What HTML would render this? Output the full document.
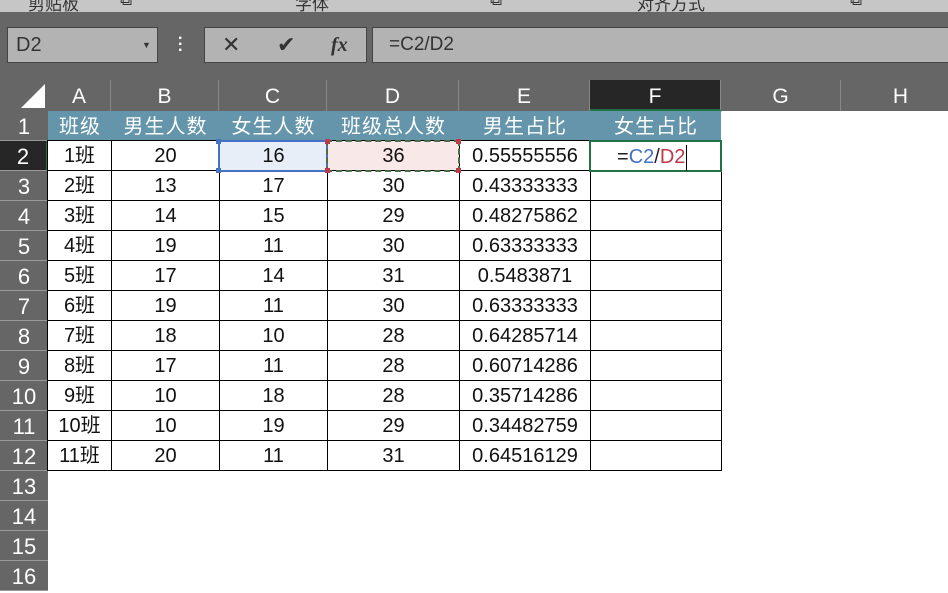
<!DOCTYPE html>
<html><head><meta charset="utf-8"><style>
*{margin:0;padding:0;box-sizing:border-box}
body{width:948px;height:573px;overflow:hidden;background:#fff;font-family:"Liberation Sans","Noto Sans CJK SC",sans-serif;position:relative}
.abs{position:absolute}
.top{left:0;top:0;width:948px;height:12px;background:#c6c6c6;overflow:hidden}
.top span{position:absolute;top:-10px;font-size:17px;color:#333}
.band{left:0;top:12px;width:948px;height:99px;background:#666}
.box{background:#b3b3b3;border:1px solid #444}
.hdr{position:absolute;top:80px;height:31px;color:#fff;font-size:21px;text-align:center;line-height:33px;border-right:1px solid #888}
.rh{position:absolute;left:0;width:48px;height:30px;background:#666;color:#fff;font-size:22px;text-align:center;line-height:32px;border-bottom:1px solid #999}
.row{position:absolute;left:47px;display:flex;height:31px}
.row div{height:31px;border:1px solid #000;margin-right:-1px;font-size:20px;text-align:center;line-height:30px;color:#111;white-space:nowrap}
.row.h div{background:#6495aa;color:#fff;border-color:#6495aa;border-right-color:#fff;letter-spacing:1px;height:30px}
.w1{width:65px}.w2{width:109px}.w3{width:109px}.w4{width:133px}.w5{width:132px}.w6{width:132px}
</style></head><body>
<div class="abs top"><span style="left:28px">剪贴板</span><span style="left:120px">⧉</span><span style="left:295px">字体</span><span style="left:490px">⧉</span><span style="left:637px">对齐方式</span><span style="left:850px">⧉</span></div>
<div class="abs band"></div>
<div class="abs box" style="left:7px;top:27px;width:151px;height:36px;font-size:20px;color:#333;line-height:34px;padding-left:8px">D2<span style="position:absolute;left:134px;top:0;font-size:9px;color:#333">▼</span></div>
<div class="abs" style="left:178px;top:36px;color:#fff;font-size:16px;line-height:6px;font-weight:bold">·<br>·<br>·</div>
<div class="abs box" style="left:204px;top:27px;width:163px;height:36px;color:#333;font-size:22px;line-height:34px"><span style="position:absolute;left:17px">✕</span><span style="position:absolute;left:72px">✔</span><span style="position:absolute;left:126px;font-family:'Liberation Serif',serif;font-style:italic;font-weight:bold;font-size:20px">fx</span></div>
<div class="abs box" style="left:372px;top:27px;width:590px;height:36px;color:#333;font-size:19px;line-height:34px;padding-left:16px">=C2/D2</div>
<div class="abs" style="left:0;top:80px;width:48px;height:31px;background:#666"><div style="position:absolute;right:3px;bottom:3px;width:0;height:0;border-left:24px solid transparent;border-bottom:24px solid #fff"></div></div>
<div class="hdr" style="left:48px;width:63px">A</div>
<div class="hdr" style="left:111px;width:108px">B</div>
<div class="hdr" style="left:219px;width:108px">C</div>
<div class="hdr" style="left:327px;width:132px">D</div>
<div class="hdr" style="left:459px;width:131px">E</div>
<div class="hdr" style="left:590px;width:131px;background:#262626;border-bottom:2px solid #217346">F</div>
<div class="hdr" style="left:721px;width:120px">G</div>
<div class="hdr" style="left:841px;width:120px">H</div>
<div class="rh" style="top:111px">1</div>
<div class="rh" style="top:141px;background:#262626;border-right:2px solid #217346">2</div>
<div class="rh" style="top:171px">3</div><div class="rh" style="top:201px">4</div><div class="rh" style="top:231px">5</div><div class="rh" style="top:261px">6</div><div class="rh" style="top:291px">7</div><div class="rh" style="top:321px">8</div><div class="rh" style="top:351px">9</div><div class="rh" style="top:381px">10</div><div class="rh" style="top:411px">11</div><div class="rh" style="top:441px">12</div><div class="rh" style="top:471px">13</div><div class="rh" style="top:501px">14</div><div class="rh" style="top:531px">15</div><div class="rh" style="top:561px">16</div>
<div class="row h" style="top:111px;left:48px"><div class="w1" style="width:64px">班级</div><div class="w2">男生人数</div><div class="w3">女生人数</div><div class="w4">班级总人数</div><div class="w5">男生占比</div><div class="w6">女生占比</div></div>
<div class="row" style="top:140px"><div class="w1">1班</div><div class="w2">20</div><div class="w3" style="background:#e8eef8">16</div><div class="w4" style="background:#f8e8e8">36</div><div class="w5">0.55555556</div><div class="w6"></div></div>
<div class="row" style="top:170px"><div class="w1">2班</div><div class="w2">13</div><div class="w3">17</div><div class="w4">30</div><div class="w5">0.43333333</div><div class="w6"></div></div>
<div class="row" style="top:200px"><div class="w1">3班</div><div class="w2">14</div><div class="w3">15</div><div class="w4">29</div><div class="w5">0.48275862</div><div class="w6"></div></div>
<div class="row" style="top:230px"><div class="w1">4班</div><div class="w2">19</div><div class="w3">11</div><div class="w4">30</div><div class="w5">0.63333333</div><div class="w6"></div></div>
<div class="row" style="top:260px"><div class="w1">5班</div><div class="w2">17</div><div class="w3">14</div><div class="w4">31</div><div class="w5">0.5483871</div><div class="w6"></div></div>
<div class="row" style="top:290px"><div class="w1">6班</div><div class="w2">19</div><div class="w3">11</div><div class="w4">30</div><div class="w5">0.63333333</div><div class="w6"></div></div>
<div class="row" style="top:320px"><div class="w1">7班</div><div class="w2">18</div><div class="w3">10</div><div class="w4">28</div><div class="w5">0.64285714</div><div class="w6"></div></div>
<div class="row" style="top:350px"><div class="w1">8班</div><div class="w2">17</div><div class="w3">11</div><div class="w4">28</div><div class="w5">0.60714286</div><div class="w6"></div></div>
<div class="row" style="top:380px"><div class="w1">9班</div><div class="w2">10</div><div class="w3">18</div><div class="w4">28</div><div class="w5">0.35714286</div><div class="w6"></div></div>
<div class="row" style="top:410px"><div class="w1">10班</div><div class="w2">10</div><div class="w3">19</div><div class="w4">29</div><div class="w5">0.34482759</div><div class="w6"></div></div>
<div class="row" style="top:440px"><div class="w1">11班</div><div class="w2">20</div><div class="w3">11</div><div class="w4">31</div><div class="w5">0.64516129</div><div class="w6"></div></div>
<div class="abs" style="left:218px;top:140px;width:110px;height:32px;border:2px solid #4472c4"></div>
<div class="abs" style="left:326px;top:140px;width:134px;height:32px;border:2px dashed #4a6e4a"></div>
<div class="abs" style="left:325px;top:139px;width:5px;height:5px;background:#c0394b"></div>
<div class="abs" style="left:456px;top:139px;width:5px;height:5px;background:#c0394b"></div>
<div class="abs" style="left:325px;top:168px;width:5px;height:5px;background:#c0394b"></div>
<div class="abs" style="left:456px;top:168px;width:5px;height:5px;background:#c0394b"></div>
<div class="abs" style="left:216px;top:139px;width:5px;height:5px;background:#4472c4"></div>
<div class="abs" style="left:216px;top:168px;width:5px;height:5px;background:#4472c4"></div>
<div class="abs" style="left:589px;top:140px;width:133px;height:32px;border:2px solid #217346;background:#fff;font-size:20px;line-height:30px;padding-left:26px;color:#222">=<span style="color:#4472c4">C2</span>/<span style="color:#c0394b">D2</span><span style="display:inline-block;width:1px;height:26px;background:#000;vertical-align:middle;margin-left:1px"></span></div>
</body></html>
